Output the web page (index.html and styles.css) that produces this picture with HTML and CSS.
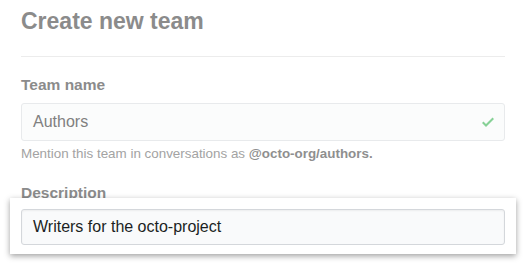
FILE: index.html
```html
<!DOCTYPE html>
<html>
<head>
<meta charset="utf-8">
<link rel="stylesheet" href="styles.css">
</head>
<body>
<div class="page">
  <div class="subhead">
    <h2 class="subhead-title">Create new team</h2>
  </div>
  <div class="form-group">
    <div class="label">Team name</div>
    <div class="control faded">
      <span class="value">Authors</span>
      <svg class="check" width="12" height="16" viewBox="0 0 12 16"><path d="M12 5l-8 8-4-4 1.5-1.5L4 10l6.5-6.5L12 5z"/></svg>
    </div>
    <p class="note">Mention this team in conversations as <strong>@octo-org/authors.</strong></p>
  </div>
  <div class="form-group second">
    <div class="label">Description</div>
    <div class="highlight">
      <div class="control active">
        <span class="value">Writers for the octo-project</span>
      </div>
    </div>
  </div>
</div>
</body>
</html>
```
FILE: styles.css
```css
html, body {
  margin: 0;
  padding: 0;
  background: #fff;
}
body {
  font-family: "Liberation Sans", Arial, Helvetica, sans-serif;
  width: 526px;
  height: 266px;
  overflow: hidden;
}
.page {
  padding: 7px 21px 0 21px;
}
.subhead {
  padding-bottom: 20px;
  border-bottom: 1px solid #ececec;
}
.subhead-title {
  margin: 0;
  font-size: 23px;
  line-height: 29px;
  font-weight: bold;
  color: #8b8b8b;
}
.form-group {
  margin-top: 18px;
}
.form-group.second {
  margin-top: 20px;
}
.label {
  font-size: 15.5px;
  line-height: 20px;
  font-weight: bold;
  color: #8b8b8b;
  margin-bottom: 8px;
}
.second .label {
  margin-bottom: 0;
}
.control {
  display: flex;
  align-items: center;
  box-sizing: border-box;
  border-radius: 3px;
  padding: 0 11px;
  font-size: 16px;
}
.control.faded {
  height: 38px;
  border: 1px solid #e8eaec;
  background: #fbfcfc;
  color: #808080;
}
.control.active {
  height: 36px;
  border: 1px solid #d4d7db;
  background: #f9fafb;
  color: #1b1f23;
  box-shadow: inset 0 1px 2px rgba(27, 31, 35, 0.06);
}
.check {
  margin-left: auto;
  margin-right: -1px;
  fill: #86d196;
}
.note {
  margin: 4px 0 0 0;
  font-size: 13.4px;
  line-height: 18px;
  color: #a3a3a3;
}
.note strong {
  color: #8f8f8f;
}
.highlight {
  position: relative;
  margin: -5px -11px 0 -11px;
  padding: 11px 11px 9px 11px;
  background: #fff;
  box-shadow: 0 2px 6px rgba(0, 0, 0, 0.38);
}
```
